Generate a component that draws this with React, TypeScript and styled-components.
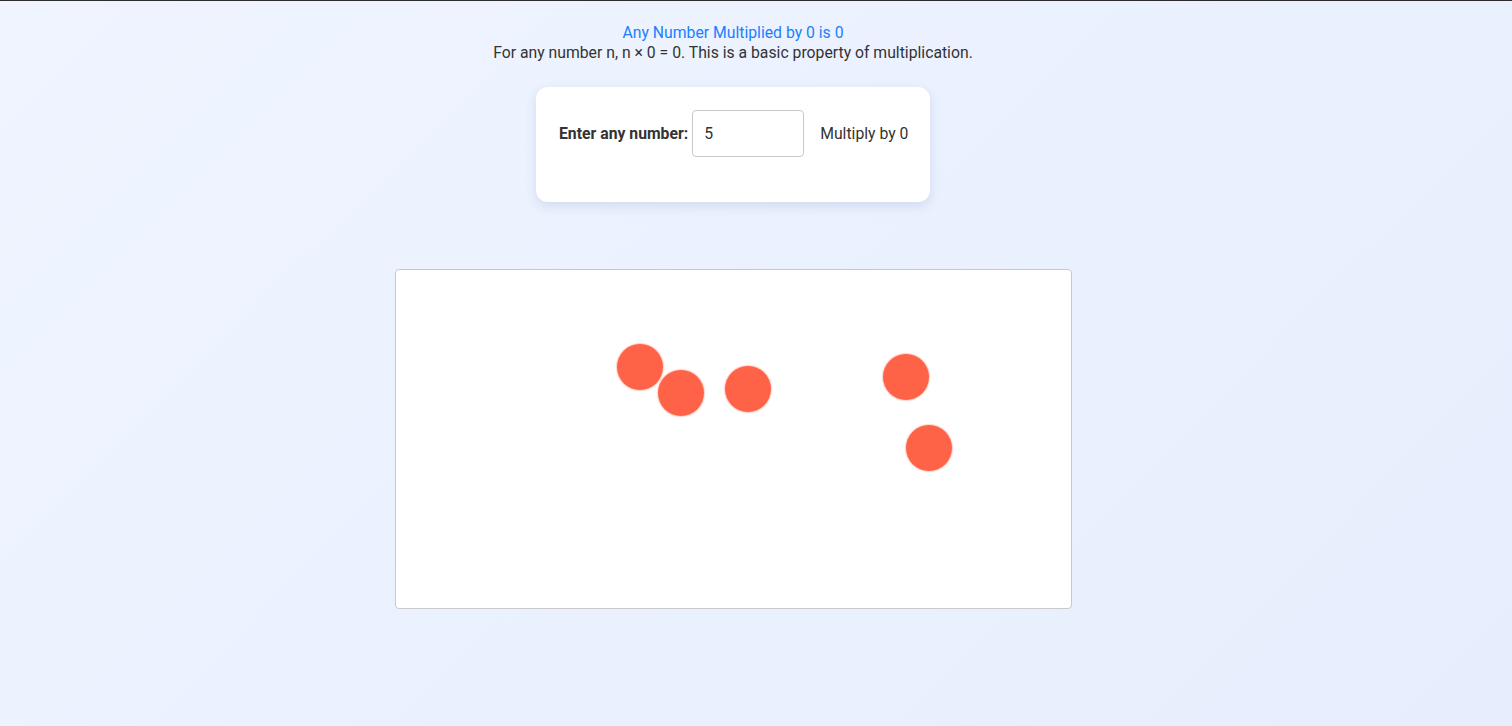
import React, { useState } from "react";
import styled, { createGlobalStyle } from "styled-components";

const GlobalStyle = createGlobalStyle`
  html, body {
    margin: 0;
    padding: 0;
  }
  body {
    font-family: Roboto, "Liberation Sans", Arial, sans-serif;
    background: linear-gradient(135deg, #eff4ff 0%, #e6eefd 100%);
    min-height: 726px;
    border-top: 1px solid #2b2b2b;
    box-sizing: border-box;
  }
`;

const Page = styled.div`
  display: flex;
  flex-direction: column;
  align-items: center;
  padding: 22px 46px 0 0;
  min-height: 703px;
`;

const Title = styled.h1`
  margin: 0;
  font-size: 15.75px;
  font-weight: 400;
  line-height: 20px;
  color: #1a80ff;
`;

const Subtitle = styled.p`
  margin: 0;
  font-size: 15.75px;
  line-height: 20px;
  color: #333;
`;

const Card = styled.div`
  margin-top: 24px;
  width: 394px;
  box-sizing: border-box;
  padding: 23px 22px 45px 23px;
  background: #fff;
  border-radius: 12px;
  box-shadow: 0 4px 12px rgba(60, 80, 140, 0.14);
`;

const Row = styled.div`
  display: flex;
  align-items: center;
  white-space: nowrap;
`;

const Label = styled.label`
  flex-shrink: 0;
  font-size: 15.75px;
  font-weight: 700;
  color: #333;
  margin: -1px 4px 0 0;
`;

const NumberInput = styled.input`
  flex-shrink: 0;
  width: 112px;
  height: 47px;
  box-sizing: border-box;
  padding: 0 11px;
  border: 1px solid #c8c8c8;
  border-radius: 4px;
  font-family: inherit;
  font-size: 15.75px;
  color: #333;
  &:focus {
    outline: none;
  }
`;

const Note = styled.span`
  flex-shrink: 0;
  margin: -1px 0 0 16px;
  font-size: 15.75px;
  color: #333;
`;

const Canvas = styled.div`
  position: relative;
  margin-top: 67px;
  width: 677px;
  height: 340px;
  box-sizing: border-box;
  background: #fff;
  border: 1px solid #c9c9c9;
  border-radius: 4px;
`;

const Ball = styled.div`
  position: absolute;
  width: 46px;
  height: 46px;
  box-sizing: border-box;
  border-radius: 50%;
  background: #ff6347;
  box-shadow: 0 0 1px 1px rgba(255, 160, 140, 0.5);
`;

// ball positions inside the canvas
const balls = [
  { x: 221, y: 74 },
  { x: 262, y: 100 },
  { x: 329, y: 96 },
  { x: 487, y: 84 },
  { x: 510, y: 155 },
];

const App = () => {
  const [value, setValue] = useState("5");

  return (
    <>
      <GlobalStyle />
      <Page>
        <Title>Any Number Multiplied by 0 is 0</Title>
        <Subtitle>For any number n, n × 0 = 0. This is a basic property of multiplication.</Subtitle>
        <Card>
          <Row>
            <Label htmlFor="num">Enter any number:</Label>
            <NumberInput
              id="num"
              type="text"
              value={value}
              onChange={(e: React.ChangeEvent<HTMLInputElement>) => setValue(e.target.value)}
            />
            <Note>Multiply by 0</Note>
          </Row>
        </Card>
        <Canvas>
          {balls.map((b, i) => (
            <Ball key={i} style={{ left: b.x, top: b.y }} />
          ))}
        </Canvas>
      </Page>
    </>
  );
};

export default App;
